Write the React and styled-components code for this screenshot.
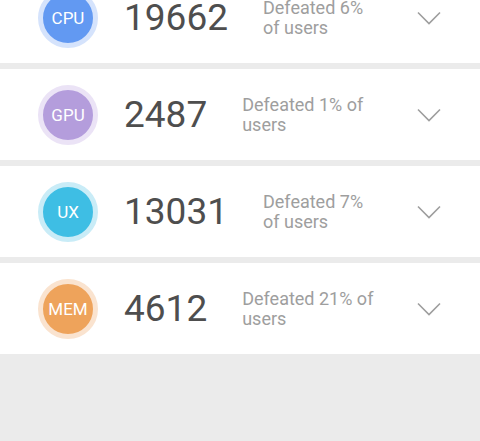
import React from 'react';
import styled, { createGlobalStyle } from 'styled-components';

const GlobalStyle = createGlobalStyle`
  html, body {
    margin: 0;
    padding: 0;
    background: #ebebeb;
    font-family: Roboto, "Liberation Sans", Arial, sans-serif;
  }
  body {
    height: 441px;
    overflow: hidden;
  }
`;

const List = styled.div`
  display: flex;
  flex-direction: column;
  gap: 6px;
  margin-top: -28px;
`;

const Row = styled.div`
  display: flex;
  align-items: center;
  height: 91px;
  padding: 0 39px 0 38px;
  background: #ffffff;
`;

const Badge = styled.div`
  flex: none;
  width: 50px;
  height: 50px;
  border-radius: 50%;
  background: ${(p) => p.$color};
  border: 5px solid ${(p) => p.$ring};
  display: flex;
  align-items: center;
  justify-content: center;
  color: #ffffff;
  font-size: 17px;
`;

const Score = styled.div`
  flex: none;
  margin-left: 26px;
  font-size: 37px;
  color: #4e4e4e;
`;

const Desc = styled.div`
  flex: 1;
  margin-left: 35px;
  font-size: 18px;
  line-height: 20px;
  color: #9e9e9e;
`;

const Chevron = styled.svg`
  flex: none;
  margin-left: 39px;
  width: 24px;
  height: 14px;
`;

const items = [
  { label: 'CPU', score: '19662', pct: 6, color: '#6299f2', ring: '#d5e3fc' },
  { label: 'GPU', score: '2487', pct: 1, color: '#b49ddc', ring: '#ebe3f6' },
  { label: 'UX', score: '13031', pct: 7, color: '#3ebee4', ring: '#c9ecf7' },
  { label: 'MEM', score: '4612', pct: 21, color: '#eea35b', ring: '#fae3cf' },
];

export default function App() {
  return (
    <>
      <GlobalStyle />
      <List>
        {items.map((item) => (
          <Row key={item.label}>
            <Badge $color={item.color} $ring={item.ring}>{item.label}</Badge>
            <Score>{item.score}</Score>
            <Desc>Defeated {item.pct}% of users</Desc>
            <Chevron viewBox="0 0 24 14">
              <polyline points="1,1.5 12,12.5 23,1.5" fill="none" stroke="#9e9e9e" strokeWidth="1.6" />
            </Chevron>
          </Row>
        ))}
      </List>
    </>
  );
}
